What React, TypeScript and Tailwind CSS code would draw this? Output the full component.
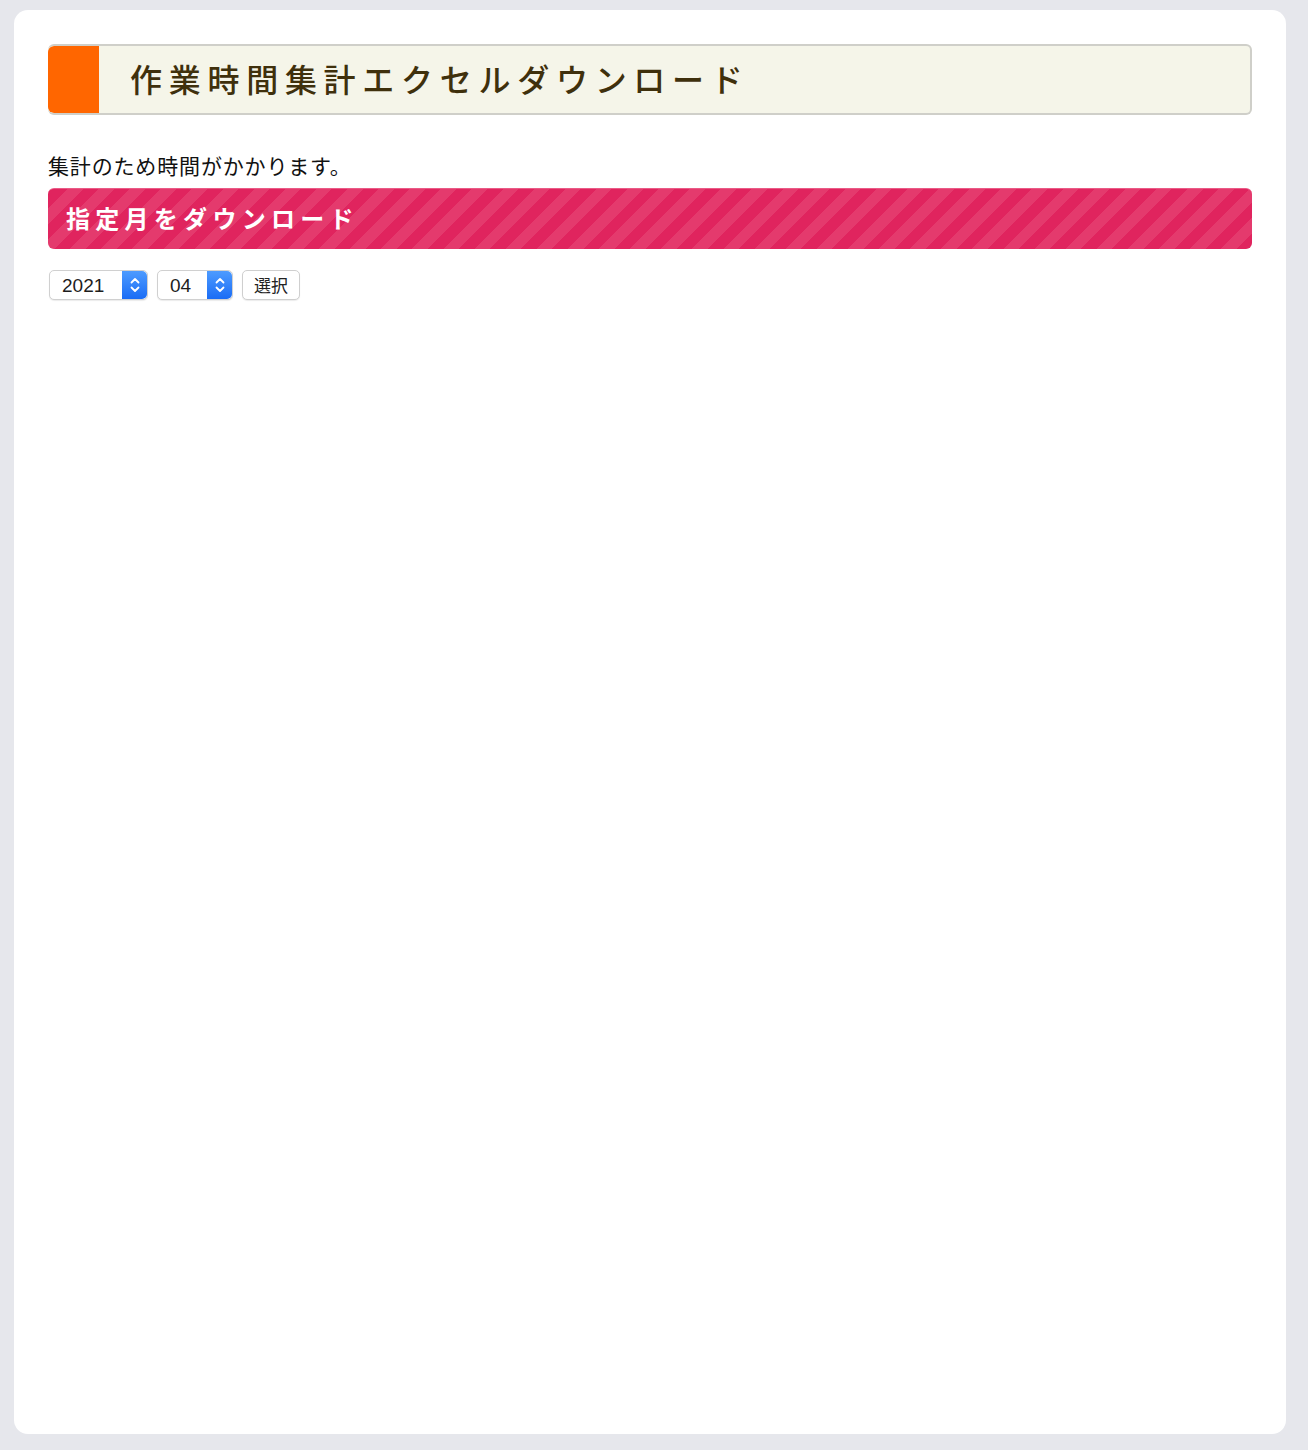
import React from "react";

const jp = "font-['Hiragino_Sans','Noto_Sans_CJK_JP','Noto_Sans',sans-serif]";

function Stepper() {
  return (
    <span className="flex h-full w-[25px] items-center justify-center rounded-r-[5px] bg-gradient-to-b from-[#4d9bff] to-[#1a6cf5]">
      <svg width="12" height="18" viewBox="0 0 12 18" fill="none">
        <path d="M2.5 6.5 6 3l3.5 3.5" stroke="white" strokeWidth="1.8" strokeLinecap="round" strokeLinejoin="round" />
        <path d="M2.5 11.5 6 15l3.5-3.5" stroke="white" strokeWidth="1.8" strokeLinecap="round" strokeLinejoin="round" />
      </svg>
    </span>
  );
}

function FakeSelect({ value, width }: { value: string; width: string }) {
  return (
    <div
      className={`flex h-[30px] ${width} items-center rounded-[5px] border border-[#d0d0d0] bg-white shadow-[0_1px_1px_rgba(0,0,0,0.08)]`}
    >
      <span className="flex-1 pl-[12px] text-[19px] leading-none text-[#1d1d1d] font-['Helvetica','Liberation_Sans',sans-serif]">
        {value}
      </span>
      <Stepper />
    </div>
  );
}

export default function App() {
  return (
    <div className={`min-h-[1450px] bg-[#e6e7ec] pl-[14px] pr-[22px] pt-[10px] pb-[16px] ${jp}`}>
      <div className="h-[1424px] rounded-[14px] bg-white px-[34px] pt-[34px]">
        <div className="flex h-[71px] overflow-hidden rounded-[6px] border-2 border-l-0 border-[#cfcfc9] bg-[#f5f5e9]">
          <div className="w-[51px] shrink-0 rounded-l-[6px] bg-[#ff6600]" />
          <h1 className="flex items-center pb-[3px] pl-[31px] text-[32px] font-medium tracking-[0.21em] text-[#3f300c]">
            作業時間集計エクセルダウンロード
          </h1>
        </div>

        <p className="mt-[36px] text-[21px] leading-[28px] tracking-[0.04em] text-[#111]">
          集計のため時間がかかります。
        </p>

        <div className="mt-[9px] flex h-[61px] items-center rounded-[6px] border-t border-[#ea5a86] bg-[repeating-linear-gradient(-45deg,#e0245e_0px,#e0245e_11px,#e43a6d_11px,#e43a6d_22px)] pl-[18px]">
          <h2 className="pb-[2px] text-[24px] font-bold tracking-[0.22em] text-white">指定月をダウンロード</h2>
        </div>

        <div className="mt-[21px] flex items-center gap-[9px] pl-px">
          <FakeSelect value="2021" width="w-[99px]" />
          <FakeSelect value="04" width="w-[76px]" />
          <button className="flex h-[30px] w-[58px] items-center justify-center rounded-[5px] border border-[#cfcfcf] bg-white text-[17px] text-[#222] shadow-[0_1px_1px_rgba(0,0,0,0.08)]">
            選択
          </button>
        </div>
      </div>
    </div>
  );
}
